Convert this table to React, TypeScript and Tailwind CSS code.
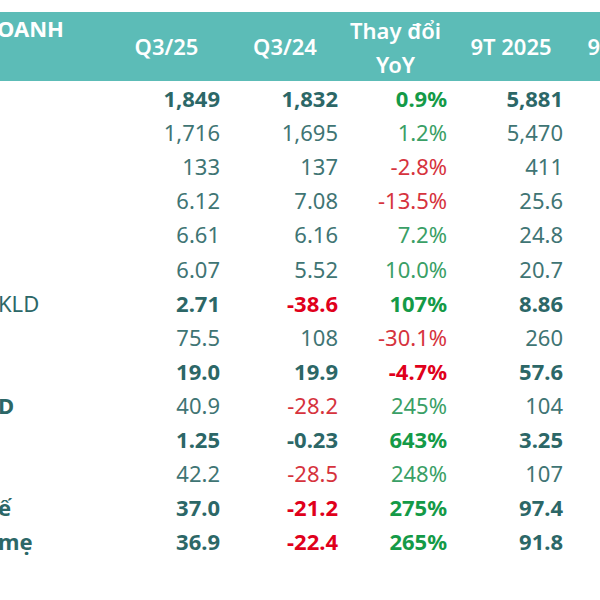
type Tone = "teal" | "green" | "red";

interface Cell {
  v: string;
  tone?: Tone;
}

interface Row {
  label?: string;
  labelBold?: boolean;
  bold?: boolean;
  cells: Cell[];
}

const rows: Row[] = [
  { bold: true, cells: [{ v: "1,849" }, { v: "1,832" }, { v: "0.9%", tone: "green" }, { v: "5,881" }, { v: "" }] },
  { cells: [{ v: "1,716" }, { v: "1,695" }, { v: "1.2%", tone: "green" }, { v: "5,470" }, { v: "" }] },
  { cells: [{ v: "133" }, { v: "137" }, { v: "-2.8%", tone: "red" }, { v: "411" }, { v: "" }] },
  { cells: [{ v: "6.12" }, { v: "7.08" }, { v: "-13.5%", tone: "red" }, { v: "25.6" }, { v: "" }] },
  { cells: [{ v: "6.61" }, { v: "6.16" }, { v: "7.2%", tone: "green" }, { v: "24.8" }, { v: "" }] },
  { cells: [{ v: "6.07" }, { v: "5.52" }, { v: "10.0%", tone: "green" }, { v: "20.7" }, { v: "" }] },
  { label: "KLD", bold: true, cells: [{ v: "2.71" }, { v: "-38.6", tone: "red" }, { v: "107%", tone: "green" }, { v: "8.86" }, { v: "" }] },
  { cells: [{ v: "75.5" }, { v: "108" }, { v: "-30.1%", tone: "red" }, { v: "260" }, { v: "" }] },
  { bold: true, cells: [{ v: "19.0" }, { v: "19.9" }, { v: "-4.7%", tone: "red" }, { v: "57.6" }, { v: "" }] },
  { label: "D", labelBold: true, cells: [{ v: "40.9" }, { v: "-28.2", tone: "red" }, { v: "245%", tone: "green" }, { v: "104" }, { v: "" }] },
  { bold: true, cells: [{ v: "1.25" }, { v: "-0.23" }, { v: "643%", tone: "green" }, { v: "3.25" }, { v: "" }] },
  { cells: [{ v: "42.2" }, { v: "-28.5", tone: "red" }, { v: "248%", tone: "green" }, { v: "107" }, { v: "" }] },
  { label: "ế", labelBold: true, bold: true, cells: [{ v: "37.0" }, { v: "-21.2", tone: "red" }, { v: "275%", tone: "green" }, { v: "97.4" }, { v: "" }] },
  { label: "mẹ", labelBold: true, bold: true, cells: [{ v: "36.9" }, { v: "-22.4", tone: "red" }, { v: "265%", tone: "green" }, { v: "91.8" }, { v: "" }] },
];

const toneClass = (tone: Tone | undefined, bold: boolean) => {
  if (tone === "green") return bold ? "text-[#149a47]" : "text-[#3a9f66]";
  if (tone === "red") return bold ? "text-[#e0001b]" : "text-[#d6333d]";
  return bold ? "text-[#2c6767]" : "text-[#3f7574]";
};

const GRID = "grid grid-cols-[107px_119px_118px_109px_116px_118px]";

export default function App() {
  return (
    <div
      className="w-[600px] h-[600px] overflow-hidden bg-white pt-[12px]"
      style={{ fontFamily: '"Noto Sans", "Open Sans", sans-serif' }}
    >
      <div className={`${GRID} h-[69px] bg-[#5cbcb7] text-white`}>
        <div className="pt-[2px] text-[22px] font-bold leading-[28px] whitespace-nowrap">
          <span className="-ml-[3px]">OANH</span>
        </div>
        {["Q3/25", "Q3/24"].map((h) => (
          <div key={h} className="flex items-center justify-center text-[22px] font-semibold whitespace-nowrap">
            {h}
          </div>
        ))}
        <div className="flex flex-col items-center justify-center text-[22px] font-semibold leading-[34px] whitespace-nowrap -translate-x-[3px]">
          <span>Thay đổi</span>
          <span>YoY</span>
        </div>
        <div className="flex items-center justify-center text-[22px] font-semibold whitespace-nowrap">
          9T 2025
        </div>
        <div className="flex items-center justify-center text-[22px] font-semibold whitespace-nowrap">
          9T 2024
        </div>
      </div>

      {rows.map((r, i) => (
        <div key={i} className={`${GRID} h-[34.1px] items-center text-[22px] leading-none`}>
          <div
            className={`whitespace-nowrap text-[#2c6767] ${r.labelBold ? "font-bold" : "font-normal"}`}
          >
            <span className="-ml-[2px]">{r.label ?? ""}</span>
          </div>
          {r.cells.map((c, j) => (
            <div
              key={j}
              className={`pr-[6px] text-right whitespace-nowrap ${r.bold ? "font-bold" : "font-normal"} ${toneClass(c.tone, !!r.bold)}`}
            >
              {c.v}
            </div>
          ))}
        </div>
      ))}
    </div>
  );
}
